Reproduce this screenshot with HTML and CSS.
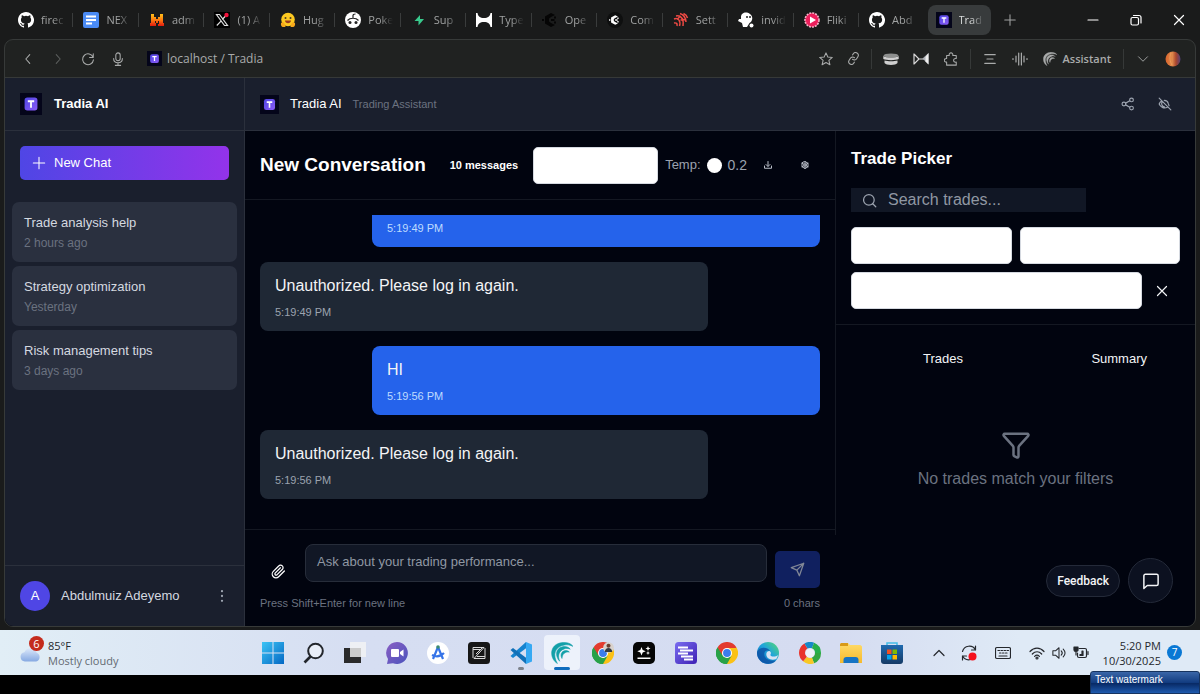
FILE: index.html
```html
<!DOCTYPE html>
<html lang="en">
<head>
<meta charset="utf-8">
<meta name="viewport" content="width=device-width, initial-scale=1">
<title>Tradia</title>
<link rel="stylesheet" href="styles.css">
</head>
<body>
<svg class="defs" aria-hidden="true">
  <defs>
    <linearGradient id="g-tradia" x1="0" y1="0" x2="1" y2="1"><stop offset="0" stop-color="#4f46e5"/><stop offset="1" stop-color="#8b5cf6"/></linearGradient>
    <linearGradient id="g-win" x1="0" y1="0" x2="1" y2="1"><stop offset="0" stop-color="#3cc4f5"/><stop offset="1" stop-color="#0468c4"/></linearGradient>
    <linearGradient id="g-teams" x1="0" y1="0" x2="1" y2="1"><stop offset="0" stop-color="#8a5fc4"/><stop offset="1" stop-color="#4b53bc"/></linearGradient>
    <linearGradient id="g-purple" x1="0" y1="0" x2="1" y2="1"><stop offset="0" stop-color="#7a6df0"/><stop offset="1" stop-color="#3d1fb4"/></linearGradient>
    <linearGradient id="g-edge" x1="0" y1="1" x2="1" y2="0"><stop offset="0" stop-color="#0a5fb8"/><stop offset=".55" stop-color="#1fa5dc"/><stop offset="1" stop-color="#58dc6a"/></linearGradient>
    <linearGradient id="g-folder" x1="0" y1="0" x2="0" y2="1"><stop offset="0" stop-color="#ffdc6a"/><stop offset="1" stop-color="#f6b92c"/></linearGradient>
    <linearGradient id="g-store" x1="0" y1="0" x2="0" y2="1"><stop offset="0" stop-color="#1f6ab0"/><stop offset="1" stop-color="#163a66"/></linearGradient>
    <linearGradient id="g-cloud" x1="0" y1="0" x2="0" y2="1"><stop offset="0" stop-color="#dce8fa"/><stop offset="1" stop-color="#86a9e2"/></linearGradient>
    <linearGradient id="g-mistral" x1="0" y1="0" x2="0" y2="1"><stop offset="0" stop-color="#ffc21a"/><stop offset=".5" stop-color="#ff7a10"/><stop offset="1" stop-color="#e01a10"/></linearGradient>
    <linearGradient id="g-planet" x1="0" y1="0" x2="1" y2="0"><stop offset="0" stop-color="#d8642c"/><stop offset=".45" stop-color="#e08a4c"/><stop offset=".7" stop-color="#a8452c"/><stop offset="1" stop-color="#54407a"/></linearGradient>
    <symbol id="i-tradia" viewBox="0 0 24 24"><rect width="24" height="24" fill="#04051a"/><rect x="5" y="5" width="14" height="14" rx="3" fill="url(#g-tradia)"/><path d="M8.500 9h7M12 9v7" stroke="#fff" stroke-width="2" fill="none"/></symbol>
    <symbol id="i-github" viewBox="0 0 16 16"><path fill="#fff" d="M8 0C3.580 0 0 3.580 0 8c0 3.540 2.290 6.530 5.470 7.590.4.070.55-.17.55-.38 0-.19-.01-.82-.01-1.490-2.010.37-2.530-.49-2.690-.94-.09-.23-.48-.94-.82-1.130-.28-.15-.68-.52-.01-.53.63-.01 1.080.58 1.230.82.72 1.210 1.870.87 2.330.66.07-.52.28-.87.51-1.070-1.780-.2-3.640-.89-3.640-3.950 0-.87.31-1.590.82-2.150-.08-.2-.36-1.020.08-2.120 0 0 .67-.21 2.200.82a7.600 7.600 0 0 1 4 0c1.530-1.040 2.200-.82 2.200-.82.44 1.100.16 1.920.08 2.120.51.56.82 1.270.82 2.150 0 3.070-1.870 3.750-3.650 3.950.29.25.54.73.54 1.480 0 1.070-.01 1.930-.01 2.200 0 .21.15.46.55.38A8 8 0 0 0 8 0z"/></symbol>
    <symbol id="i-chrome" viewBox="0 0 24 24"><path d="M12 12 1.600 6A12 12 0 0 1 22.400 6z" fill="#e33b2e"/><path d="M12 12 22.400 6A12 12 0 0 1 12 24z" fill="#fbc116"/><path d="M12 12v12A12 12 0 0 1 1.600 6z" fill="#28a148"/><path d="M12 6.500h10.700L17 15z" fill="#fbc116"/><path d="M12 6.500H1.900L7 15z" fill="#e33b2e"/><path d="M1.600 6 7.200 15l4.800 2.500L17 15l-5 9A12 12 0 0 1 1.600 6z" fill="#28a148"/><circle cx="12" cy="12" r="5.500" fill="#fff"/><circle cx="12" cy="12" r="4.300" fill="#3b7ded"/></symbol>
    <symbol id="i-comet" viewBox="0 0 24 24"><path fill="currentColor" d="M7 23.500C-2 18-2 3 11 .8c6-1 11 .8 13 4-3-1.600-6-2-9-1.600C4 5 1.500 14 7 23.500zM9.500 21C4.500 16 4.500 7 12.500 5.200c4-.8 7 .5 8.500 2.600-2.500-1-4.500-1-6.500-.3C8.500 9.500 7 15 9.500 21zM12 18c-2.500-4-.5-8 3.500-8.600 2-.2 3.500.4 4.500 1.600-5-.5-7.500 2-8 7z" stroke="currentColor" stroke-width=".6"/></symbol>
    <symbol id="i-hexc" viewBox="0 0 16 16"><path d="M9 1 3 4.500v7L9 15l4-2-4-2-2-1.500v-3L9 5l4-2z" fill="currentColor"/><path d="M9 8h3.500M0 8h2M12 5.500h2M12 10.500h2" stroke="currentColor" stroke-width="2"/></symbol>
  </defs>
</svg>

<div class="desktop">
  <header class="tabstrip">
    <nav class="tabs" aria-label="Browser tabs">
      <button class="tab"><svg class="tab-icon"><use href="#i-github"/></svg><span class="tab-name">firec</span></button>
      <button class="tab"><svg class="tab-icon" viewBox="0 0 16 16"><rect width="16" height="16" rx="2" fill="#4a8bf5"/><path d="M3 4.500h10M3 8h10M3 11.500h6" stroke="#fff" stroke-width="1.800"/></svg><span class="tab-name">NEX</span></button>
      <button class="tab"><svg class="tab-icon" viewBox="0 0 16 16"><path d="M2 2h3v3h2v2h2V5h2V2h3v9h1v3H9v-2h1V9H9v2H7V9H6v2h1v3H1v-3h1z" fill="url(#g-mistral)"/></svg><span class="tab-name">adm</span></button>
      <button class="tab"><svg class="tab-icon" viewBox="0 0 16 16"><rect width="16" height="16" fill="#000"/><path d="M2.500 2.500h3l8 11h-3zM13 2.500l-4.800 5M7 9.200l-4.200 4.300" stroke="#ddd" fill="none" stroke-width="1.200"/><circle cx="12.500" cy="3" r="2.200" fill="#f4123c"/></svg><span class="tab-name">(1) A</span></button>
      <button class="tab"><svg class="tab-icon" viewBox="0 0 16 16"><circle cx="8" cy="7.500" r="6.800" fill="#fdc921"/><path d="M1 11c2-2 4 0 4.500 4H3c-1.500 0-2.500-2-2-4zM15 11c-2-2-4 0-4.500 4H13c1.500 0 2.500-2 2-4z" fill="#f7a81c"/><path d="M5 8.500h6c0 3.500-6 3.500-6 0z" fill="#9a3b20"/><circle cx="5.500" cy="6" r="1" fill="#4b3b24"/><circle cx="10.500" cy="6" r="1" fill="#4b3b24"/></svg><span class="tab-name">Hug</span></button>
      <button class="tab"><svg class="tab-icon" viewBox="0 0 16 16"><circle cx="8" cy="8" r="8" fill="#fff"/><path d="M8 6V3.500C8 2.500 9.500 2 10.500 2M2.500 8.500c2.500-3 8.500-3 11 0" stroke="#222" stroke-width="1.200" fill="none"/><circle cx="5" cy="10.500" r="1.500" fill="#222"/><circle cx="11" cy="10.500" r="1.500" fill="#222"/></svg><span class="tab-name">Poke</span></button>
      <button class="tab"><svg class="tab-icon" viewBox="0 0 16 16"><path d="M9 3 3.500 9h4v4.500L13 7H9z" fill="#38c98c"/></svg><span class="tab-name">Sup</span></button>
      <button class="tab"><svg class="tab-icon" viewBox="0 0 16 16"><path d="M0 1h1.500c.5 3.500 2.500 5 6.500 5s6-1.500 6.500-5H16v14h-1.500c-.5-3.500-2.500-5-6.500-5s-6 1.500-6.500 5H0z" fill="#fff"/></svg><span class="tab-name">Type</span></button>
      <button class="tab"><svg class="tab-icon ink-black" viewBox="0 0 16 16"><use href="#i-hexc" width="16" height="16"/></svg><span class="tab-name">Ope</span></button>
      <button class="tab"><svg class="tab-icon ink-white" viewBox="0 0 16 16"><circle cx="8" cy="8" r="8" fill="#0e0f0f"/><use href="#i-hexc" x="2" y="2.500" width="11" height="11"/></svg><span class="tab-name">Com</span></button>
      <button class="tab"><svg class="tab-icon" viewBox="0 0 16 16"><g stroke="#ee4a44" stroke-width="1.500" fill="none"><path d="M1 7c4-1.500 7 1.500 5.500 7M1 11c2.500-.5 3.500.5 3 3M3 4c5-1 8 3 7 10M7 1.500c3.500 1 5.500 3.500 6 8.500M10.500 1.500c2 .8 3.500 2.500 4 4.500M4 7.500l3-3 3 2.500M7.500 8l5-.5"/></g></svg><span class="tab-name">Sett</span></button>
      <button class="tab"><svg class="tab-icon" viewBox="0 0 16 16"><path d="M3 5C3 1 8-1 12 2s2 8-.5 9L9 15H5l-1-4-4-2 1-2h2z" fill="#fff"/><circle cx="9" cy="5" r="1" fill="#222"/><circle cx="12" cy="5" r="1" fill="#222"/><circle cx="13.500" cy="13.500" r="2" fill="#fff"/></svg><span class="tab-name">invid</span></button>
      <button class="tab"><svg class="tab-icon" viewBox="0 0 16 16"><circle cx="8" cy="8" r="7" fill="#ec1e5b" stroke="#f7b5c8" stroke-width="1.600" stroke-dasharray="2 1"/><path d="M6 4.500v7l6-3.500z" fill="#fff"/></svg><span class="tab-name">Fliki</span></button>
      <button class="tab"><svg class="tab-icon"><use href="#i-github"/></svg><span class="tab-name">Abd</span></button>
      <button class="tab tab-active" aria-current="page"><svg class="tab-icon"><use href="#i-tradia"/></svg><span class="tab-name">Trad</span></button>
    </nav>
    <button class="new-tab" aria-label="New tab"><svg viewBox="0 0 16 16" class="ic14 line"><path d="M8 2v12M2 8h12"/></svg></button>
    <div class="window-controls">
      <button aria-label="Minimize"><svg viewBox="0 0 12 12" class="ic12 line"><path d="M1 6h10"/></svg></button>
      <button aria-label="Restore"><svg viewBox="0 0 12 12" class="ic12 line"><rect x="1" y="3.500" width="7.500" height="7.500" rx="1.500"/><path d="M3.500 1.500H9a2 2 0 0 1 2 2V9"/></svg></button>
      <button aria-label="Close"><svg viewBox="0 0 12 12" class="ic12 line"><path d="m1.500 1.500 9 9m0-9-9 9"/></svg></button>
    </div>
  </header>

  <div class="window">
    <div class="toolbar">
      <div class="nav-buttons">
        <button aria-label="Back"><svg viewBox="0 0 16 16" class="ic14 line"><path d="M10 3 5.500 8l4.500 5"/></svg></button>
        <button class="dim" aria-label="Forward"><svg viewBox="0 0 16 16" class="ic14 line"><path d="m6 3 4.500 5L6 13"/></svg></button>
        <button aria-label="Reload"><svg viewBox="0 0 16 16" class="ic14 line"><path d="M13.800 6A6.200 6.200 0 1 0 14.200 9M14 2v4.200H9.800"/></svg></button>
        <button aria-label="Voice"><svg viewBox="0 0 16 16" class="ic14 line"><rect x="5.500" y="1" width="5" height="9" rx="2.500"/><path d="M3 7.500c0 6.500 10 6.500 10 0M8 12.500v3M5 15.300h6"/></svg></button>
      </div>
      <a class="address" href="#"><svg class="favicon"><use href="#i-tradia"/></svg>localhost / Tradia</a>
      <div class="tool-group">
        <button aria-label="Bookmark"><svg viewBox="0 0 16 16" class="ic14 line"><path d="m8 1 2.100 4.700 5.100.5-3.900 3.400 1.200 5L8 12l-4.500 2.600 1.200-5L.8 6.200l5.100-.5z"/></svg></button>
        <button aria-label="Copy link"><svg viewBox="0 0 24 24" class="ic13 line2"><g transform="rotate(-12 12 12)"><path d="M10 13a5 5 0 0 0 7.540.54l3-3a5 5 0 0 0-7.070-7.070l-1.720 1.710M14 11a5 5 0 0 0-7.540-.54l-3 3a5 5 0 0 0 7.070 7.070l1.710-1.710"/></g></svg></button>
      </div>
      <div class="tool-group tool-wide">
        <button aria-label="Storage extension"><svg viewBox="0 0 16 16" class="ic16"><ellipse cx="8" cy="4.500" rx="7.500" ry="2" fill="#8d8f8e"/><path d="M.3 5c3 2 12.400 2 15.400 0v3c-3 1.500-12.400 1.500-15.400 0zM1.500 9.500c3 1 10 1 13 0V12c-1.500 2.500-11.500 2.500-13 0z" fill="#cfcfcf"/></svg></button>
        <button aria-label="Bow extension"><svg viewBox="0 0 16 16" class="ic16"><path d="M1 2.500v11M1 3l5 5-5 5M5 8h6" stroke="#d8d8d8" stroke-width="1.200" fill="none"/><path d="M15.500 2 9.500 7.500l6 6z" fill="#aeb2b8"/><path d="M15.500 2v11.500l-3-3V6z" fill="#eee"/></svg></button>
        <button aria-label="Extensions"><svg viewBox="0 0 16 16" class="ic14 line"><path d="M3 4h3c-1-4 5-4 4 0h4v3.500c-4-.8-4 5 0 4V15H3v-3.500c-3.500.5-3.500-4.500 0-4z"/></svg></button>
      </div>
      <div class="tool-group tool-wide">
        <button aria-label="Summarize"><svg viewBox="0 0 16 16" class="ic14 line"><path d="M2 3h12M4.500 8h7M2 13h12"/></svg></button>
        <button aria-label="Voice mode"><svg viewBox="0 0 16 16" class="ic16 line"><path d="M1 7.500v1M4 5v6M6.700 2v12M9.400 2v12M12 5v6M15 7.500v1"/></svg></button>
        <button class="assistant"><svg viewBox="0 0 24 24" class="ic14"><use href="#i-comet"/></svg>Assistant</button>
      </div>
      <div class="tool-group tool-wide tool-last">
        <button aria-label="More"><svg viewBox="0 0 16 16" class="ic12 line"><path d="m2 5 6 6 6-6"/></svg></button>
        <button aria-label="Profile"><svg viewBox="0 0 16 16" class="ic16"><circle cx="8" cy="8" r="7.500" fill="url(#g-planet)"/><path d="M6 2c-2 4-1 9 1 12" stroke="#f6b572" fill="none" opacity=".5"/></svg></button>
      </div>
    </div>

    <div class="app">
      <aside class="sidebar">
        <div class="brand"><svg class="brand-logo"><use href="#i-tradia"/></svg><strong>Tradia AI</strong></div>
        <button class="new-chat"><svg viewBox="0 0 16 16" class="ic14 line"><path d="M8 1.500v13M1.500 8h13"/></svg>New Chat</button>
        <nav class="history" aria-label="Chat history">
          <a class="history-item" href="#"><span class="history-name">Trade analysis help</span><span class="history-time">2 hours ago</span></a>
          <a class="history-item" href="#"><span class="history-name">Strategy optimization</span><span class="history-time">Yesterday</span></a>
          <a class="history-item" href="#"><span class="history-name">Risk management tips</span><span class="history-time">3 days ago</span></a>
        </nav>
        <div class="account">
          <span class="avatar">A</span><span class="account-name">Abdulmuiz Adeyemo</span>
          <button aria-label="Account menu"><svg viewBox="0 0 16 16" class="ic14" fill="currentColor"><circle cx="8" cy="2.500" r="1.300"/><circle cx="8" cy="8" r="1.300"/><circle cx="8" cy="13.500" r="1.300"/></svg></button>
        </div>
      </aside>

      <div class="workspace">
        <header class="app-header">
          <svg class="header-logo"><use href="#i-tradia"/></svg>
          <span class="header-name">Tradia AI</span><span class="header-sub">Trading Assistant</span>
          <div class="header-actions">
            <button aria-label="Share"><svg viewBox="0 0 24 24" class="ic14 line2"><circle cx="18" cy="5" r="3.200"/><circle cx="5" cy="12" r="3.200"/><circle cx="18" cy="19" r="3.200"/><path d="m8 13.500 7 4M15 6.500l-7 4"/></svg></button>
            <button aria-label="Hide"><svg viewBox="0 0 24 24" class="ic14 line2"><path d="m2 2 20 20M6.500 6.500C4 8.500 2.500 10.500 2 12c2 5 8 8.500 14 5.500M7 8c-2 4 0 8 4 9M10.700 5.800C15 6 17 8 17.500 11l1.500 4"/></svg></button>
          </div>
        </header>

        <div class="panes">
          <main class="chat">
            <div class="chat-header">
              <h1>New Conversation</h1>
              <span class="count">10 messages</span>
              <select class="blank model" aria-label="Model"></select>
              <label class="temp"><span>Temp:</span><input type="range" min="0" max="1" step="0.1" value="0.2"><span class="temp-value">0.2</span></label>
              <button class="mini" aria-label="Export"><svg viewBox="0 0 16 16" class="ic8 line2"><path d="M8 1v9M4 7l4 4 4-4M1 10v4.500h14V10"/></svg></button>
              <button class="mini" aria-label="Settings"><svg viewBox="0 0 16 16" class="ic8 line2"><circle cx="8" cy="8" r="2.500"/><path d="M8 1 14 4.500v7L8 15l-6-3.500v-7zM8 1v4M8 11v4M2 4.500l4 2M10 9.500l4 2M14 4.500l-4 2M6 9.500l-4 2"/></svg></button>
            </div>
            <div class="messages">
              <div class="scroller">
                <article class="message mine"><time>5:19:49 PM</time></article>
                <article class="message"><p>Unauthorized. Please log in again.</p><time>5:19:49 PM</time></article>
                <article class="message mine"><p>HI</p><time>5:19:56 PM</time></article>
                <article class="message"><p>Unauthorized. Please log in again.</p><time>5:19:56 PM</time></article>
              </div>
            </div>
            <form class="composer">
              <div class="composer-row">
                <button type="button" class="attach" aria-label="Attach file"><svg viewBox="0 0 24 24" class="ic15 line2"><path d="m21.400 11.100-9.200 9.200a6 6 0 0 1-8.500-8.500l8.600-8.600A4 4 0 1 1 18 8.800l-8.600 8.600a2 2 0 0 1-2.800-2.800l8.500-8.500"/></svg></button>
                <textarea rows="1" aria-label="Message" placeholder="Ask about your trading performance..."></textarea>
                <button type="button" class="send" aria-label="Send"><svg viewBox="0 0 24 24" class="ic15 line2"><path d="m22 2-7 20-4-9-9-4zM22 2 11 13"/></svg></button>
              </div>
              <div class="hints"><span>Press Shift+Enter for new line</span><span>0 chars</span></div>
            </form>
          </main>

          <section class="picker">
            <div class="picker-filters">
              <h2>Trade Picker</h2>
              <label class="search"><svg viewBox="0 0 24 24" class="ic15 line2"><circle cx="11" cy="11" r="8.500"/><path d="m22 22-4.800-4.800"/></svg><input type="search" aria-label="Search trades" placeholder="Search trades..."></label>
              <div class="filter-row"><select class="blank" aria-label="Symbol"></select><select class="blank" aria-label="Outcome"></select></div>
              <div class="filter-row"><select class="blank" aria-label="Period"></select><button class="clear" aria-label="Clear filters"><svg viewBox="0 0 12 12" class="ic12 line"><path d="m1.500 1.500 9 9m0-9-9 9"/></svg></button></div>
            </div>
            <div class="picker-tabs"><button>Trades</button><button>Summary</button></div>
            <div class="empty"><svg viewBox="0 0 24 24" class="ic30 line2"><path d="M10 20a1 1 0 0 0 .55.900l2 1A1 1 0 0 0 14 21v-7a2 2 0 0 1 .520-1.340L21.740 4.670A1 1 0 0 0 21 3H3a1 1 0 0 0-.740 1.670l7.220 7.990A2 2 0 0 1 10 14z"/></svg><p>No trades match your filters</p></div>
          </section>
        </div>
      </div>

      <div class="floating">
        <button class="feedback">Feedback</button>
        <button class="bubble" aria-label="Open chat"><svg viewBox="0 0 24 24" class="ic18 line2"><path d="M21.500 16a2 2 0 0 1-2 2H7l-4.500 4V5a2 2 0 0 1 2-2h15a2 2 0 0 1 2 2z"/></svg></button>
      </div>
    </div>
  </div>

  <footer class="taskbar">
    <button class="weather">
      <span class="weather-icon"><svg viewBox="0 0 24 16" class="cloud"><path d="M6 15.500a5 5 0 0 1-.5-9.900A7 7 0 0 1 18.500 6a5 5 0 0 1-.5 9.500z" fill="url(#g-cloud)"/></svg><span class="alert">6</span></span>
      <span class="weather-text"><span>85°F</span><span class="weather-desc">Mostly cloudy</span></span>
    </button>
    <nav class="apps" aria-label="Taskbar apps">
      <button aria-label="Start"><svg viewBox="0 0 22 22"><path d="M0 0h10.500v10.500H0zM11.500 0H22v10.500H11.500zM0 11.500h10.500V22H0zM11.500 11.500H22V22H11.500z" fill="url(#g-win)"/></svg></button>
      <button aria-label="Search"><svg viewBox="0 0 22 22"><circle cx="12.500" cy="9" r="7.300" fill="#e9eef8" stroke="#23262c" stroke-width="2"/><path d="m7.500 14.500-6 6" stroke="#23262c" stroke-width="2.600"/></svg></button>
      <button aria-label="Task view"><svg viewBox="0 0 22 22"><rect x="0" y="6" width="17" height="15" fill="#2a2a2b"/><rect x="6" y="0" width="16" height="15" fill="#f4f4f4" opacity=".8"/></svg></button>
      <button aria-label="Meet"><svg viewBox="0 0 22 22"><path d="M11 0a11 11 0 1 1-4 21.300L1 22l1-5A11 11 0 0 1 11 0z" fill="url(#g-teams)"/><rect x="5" y="7" width="8" height="8" rx="1" fill="#fff"/><path d="m14 10 3.500-2.500v7L14 12z" fill="#fff"/></svg></button>
      <button aria-label="App Studio"><svg viewBox="0 0 22 22"><circle cx="11" cy="11" r="11" fill="#fff"/><path d="M11 5 6 17M11 5l5 12M5 13c4 2 8 2 12-2" stroke="#3674e8" stroke-width="2.200" fill="none"/><circle cx="11" cy="5" r="1.800" fill="#3b8b72"/></svg></button>
      <button aria-label="Zed"><svg viewBox="0 0 22 22"><rect width="22" height="22" rx="3.500" fill="#171717"/><path d="M5 16V5.500h11L6 16.500h11V6M5 7.500h8M9 14.500h8M8 12l6-6" stroke="#d9d9d9" fill="none"/></svg></button>
      <button class="running" aria-label="Code editor"><svg viewBox="0 0 22 22"><path d="M16 0 .5 14l2.500 2L17 5.500z" fill="#1583cf"/><path d="M16 22 .5 8 3 6l14 10.500z" fill="#1170b8"/><path d="m16 0 6 2.500v17L16 22z" fill="#36a9f3"/></svg></button>
      <button class="running current" aria-label="Browser"><svg viewBox="0 0 24 24" class="comet"><use href="#i-comet"/></svg></button>
      <button aria-label="Chrome profile"><svg viewBox="0 0 24 24"><use href="#i-chrome"/><circle cx="18" cy="6" r="5.800" fill="#d8d2cd"/><circle cx="18" cy="4" r="2.200" fill="#6a4030"/><path d="M14 11c0-6 8-6 8 0z" fill="#333b45"/></svg></button>
      <button aria-label="Sparkle"><svg viewBox="0 0 22 22"><rect width="22" height="22" rx="5" fill="#050505"/><path d="m8.500 5 1.200 3 3 1.200-3 1.200-1.200 3-1.200-3-3-1.200 3-1.200zM15 4l.7 1.800 1.800.7-1.800.7L15 9l-.7-1.800-1.800-.7 1.800-.7zM15 9l.6 1.400 1.400.6-1.400.6L15 13l-.6-1.400L13 11l1.400-.6zM4.500 15.500h13V17h-13z" fill="#fff"/></svg></button>
      <button aria-label="Lists"><svg viewBox="0 0 22 22"><rect width="22" height="22" rx="3.500" fill="url(#g-purple)"/><path d="M3 5.500h10M5 8.500h13M3 11.500h10M6 14.500h12M9 17.500h9" stroke="#fff" stroke-width="1.800"/></svg></button>
      <button aria-label="Chrome"><svg viewBox="0 0 24 24"><use href="#i-chrome"/></svg></button>
      <button aria-label="Edge"><svg viewBox="0 0 22 22"><circle cx="11" cy="11" r="11" fill="url(#g-edge)"/><path d="M0 10c2-5 10-6 13-1-5-2-7 2-5 6 2 3 6 4 11 3.500C15 23 6 23 2 17c-1.500-2-2-4-2-7z" fill="#0c4da2" opacity=".75"/><path d="M12.500 9c2 1 1.500 3 .8 4 1 2 5 2 8 0l-2 4c-5 2-10-.5-10-4.500 0-2 1-3.500 3.200-3.500z" fill="#d7e2f3"/></svg></button>
      <button aria-label="Colour wheel"><svg viewBox="0 0 22 22"><g fill="none" stroke-width="6"><path d="M3 11a8 8 0 0 1 4-7" stroke="#e9342c"/><path d="M7 4a8 8 0 0 1 7-.5" stroke="#168ac8"/><path d="M14 3.500a8 8 0 0 1 5 7.500" stroke="#25b04c"/><path d="M19 11a8 8 0 0 1-5 7.500" stroke="#31a640"/><path d="M14 18.500A8 8 0 0 1 6 17" stroke="#f8c824"/><path d="M6 17a8 8 0 0 1-3-6" stroke="#e9342c"/></g><circle cx="11" cy="11" r="4.500" fill="#eef1f8"/></svg></button>
      <button aria-label="Files"><svg viewBox="0 0 22 22"><path d="M0 3c0-1.500 1-2 2-2h6l2 2h10c1 0 2 1 2 2v16H0z" fill="url(#g-folder)"/><path d="M0 2.500C0 1.500 1 1 2 1h6v3H0z" fill="#d89a18"/><path d="M3.500 21v-3c0-2 1-3 3-3h9c2 0 3 1 3 3v3z" fill="#1674c4"/></svg></button>
      <button aria-label="Store"><svg viewBox="0 0 22 22"><path d="M6 4V1h10v3" fill="none" stroke="#43bce8" stroke-width="1.500"/><path d="M0 3h22v16c0 2-1 3-3 3H3c-2 0-3-1-3-3z" fill="url(#g-store)"/><path d="M6 7.500h4.500V12H6z" fill="#f25022"/><path d="M11.500 7.500H16V12h-4.500z" fill="#7fba00"/><path d="M6 13h4.500v4.500H6z" fill="#00a4ef"/><path d="M11.500 13H16v4.500h-4.500z" fill="#ffb900"/></svg></button>
    </nav>
    <div class="tray">
      <button aria-label="Hidden icons"><svg viewBox="0 0 12 12" class="ic12 line"><path d="m1 8.500 5-5 5 5"/></svg></button>
      <button class="sync" aria-label="Update"><svg viewBox="0 0 16 16" class="ic16 line"><path d="M1.500 6.500A7 7 0 0 1 14.500 5M14.500 1v4h-4M14.500 9.500A7 7 0 0 1 1.500 11M1.500 15v-4h4"/><circle cx="11.500" cy="11.500" r="4" fill="#f5101c" stroke="none"/></svg></button>
      <button class="keyboard" aria-label="Keyboard"><svg viewBox="0 0 16 16" class="ic16 line"><rect x=".5" y="2.500" width="15" height="11" rx="1.500"/><path d="M3 5.500h1.500M6 5.500h1.500M9 5.500h1.500M12 5.500h1.500M4.500 8H6M7.500 8H9M10.500 8H12M4 11h8"/></svg></button>
      <button class="status" aria-label="Quick settings">
        <svg viewBox="0 0 16 16" class="ic16 line"><path d="M1 6.500c4-4.500 10-4.500 14 0M3.300 9c3-3 6.500-3 9.400 0M5.600 11.300c1.500-1.500 3.300-1.500 4.800 0"/><circle cx="8" cy="13" r="1"/></svg>
        <svg viewBox="0 0 16 16" class="ic14 line"><path d="M1 5.500h3L8 2v12l-4-3.500H1zM10.500 5.500c1.500 1.500 1.500 3.500 0 5M12.800 3.500c2.800 2.800 2.800 6.200 0 9"/></svg>
        <svg viewBox="0 0 16 16" class="ic16 line"><path d="M6 3.500h6c1 0 1.500.5 1.500 1.500v6c0 1-.5 1.500-1.500 1.500H6c-1 0-1.500-.5-1.500-1.500V8M15 6.500v3"/><path d="M7 9.500v1h3V6H9v3.500zM1 2v3c0 2 4 2 4 0V2zM3 6v4" fill="currentColor"/></svg>
      </button>
      <button class="clock"><span>5:20 PM</span><span>10/30/2025</span></button>
      <span class="notices">7</span>
    </div>
  </footer>
  <div class="bezel"><span class="watermark">Text watermark</span></div>
</div>
</body>
</html>
```
FILE: styles.css
```css
* { box-sizing: border-box; }
body { margin: 0; background: #1a1b1b; color: #f3f4f6; font-family: "Liberation Sans", Arial, sans-serif; font-size: 13px; line-height: 18px; }
button { display: inline-flex; align-items: center; justify-content: center; margin: 0; padding: 0; border: 0; background: none; color: inherit; font: inherit; cursor: pointer; }
a { color: inherit; text-decoration: none; }
h1, h2, p { margin: 0; }
svg { display: block; flex: none; }
.defs { position: absolute; width: 0; height: 0; }

.ic8 { width: 8px; height: 8px; }
.ic12 { width: 12px; height: 12px; }
.ic13 { width: 13px; height: 13px; }
.ic14 { width: 14px; height: 14px; }
.ic15 { width: 15px; height: 15px; }
.ic16 { width: 16px; height: 16px; }
.ic18 { width: 18px; height: 18px; }
.ic30 { width: 30px; height: 30px; }
.line, .line2 { fill: none; stroke: currentColor; stroke-linecap: round; stroke-linejoin: round; }
.line { stroke-width: 1.2; }
.line2 { stroke-width: 2; }
.ink-black { color: #050505; }
.ink-white { color: #fff; }

.desktop { display: flex; flex-direction: column; min-height: 100vh; }

/* Browser tabs */
.tabstrip { display: flex; height: 39px; padding-left: 8px; color: #a0a2a2; font-family: "Open Sans", "Noto Sans", sans-serif; font-size: 11px; }
.tabs { display: flex; flex: 1; min-width: 0; align-items: center; }
.tab { position: relative; flex: 1 1 0; min-width: 0; height: 30px; gap: 7px; padding: 0 4px 0 10px; justify-content: flex-start; }
.tab::after { content: ""; position: absolute; right: 0; top: 8px; width: 1px; height: 14px; background: #3a3c3c; }
.tab:nth-last-child(-n+2)::after { display: none; }
.tab-icon { width: 16px; height: 16px; }
.tab-name { white-space: nowrap; mask-image: linear-gradient(90deg, #000 12px, transparent 25px); }
.tab-active { margin: 0 1px 0 3px; padding: 0 4px 0 8px; border-radius: 8px; background: #383b3c; color: #d8dada; }
.new-tab { width: 36px; }
.window-controls { display: flex; margin-left: 43px; color: #fff; }
.window-controls button { width: 43px; }

/* Browser window */
.window { display: flex; flex: 1; flex-direction: column; margin: 0 4px 3px; border: 1px solid #373a39; border-radius: 9px; overflow: hidden; background: #202221; }
.toolbar { display: flex; align-items: center; height: 38px; padding: 0 7px 0 8px; border-bottom: 1px solid #363938; color: #a9abab; font-family: "Open Sans", "Noto Sans", sans-serif; font-size: 12px; }
.nav-buttons { display: flex; }
.nav-buttons button, .tool-wide button { width: 30px; height: 30px; }
.nav-buttons .dim { color: #5c5f5e; }
.address { display: flex; flex: 1; align-items: center; gap: 5px; margin-left: 14px; }
.favicon { width: 15px; height: 15px; }
.tool-group { display: flex; align-items: center; height: 20px; padding: 0 4px; border-right: 1px solid #363938; }
.tool-group button { width: 27px; height: 30px; }
.tool-group.tool-wide button { width: 30px; }
.tool-group.tool-wide .assistant { width: auto; gap: 6px; padding: 0 8px; font-size: 11px; font-weight: 600; }
.tool-last { border: 0; padding-right: 0; }

/* Application shell */
.app { position: relative; display: flex; flex: 1; background: #01040f; }
.sidebar { display: flex; flex: none; flex-direction: column; width: 240px; border-right: 1px solid #2b303c; background: #1a1f2d; }
.brand { display: flex; align-items: center; gap: 12px; height: 53px; padding-left: 15px; border-bottom: 1px solid #2b303c; color: #fff; }
.brand-logo { width: 22px; height: 22px; }
.new-chat { height: 34px; margin: 15px 15px 22px; padding-left: 12px; gap: 8px; justify-content: flex-start; border-radius: 5px; background: linear-gradient(90deg, #4f46e5, #9333ea); color: #fff; }
.history { display: flex; flex-direction: column; gap: 4px; padding: 0 7px; }
.history-item { display: flex; flex-direction: column; gap: 3px; height: 60px; padding: 12px; border-radius: 7px; background: #2a303f; }
.history-name { color: #d5d9e0; }
.history-time { color: #6b7280; font-size: 12px; line-height: 16px; }
.account { display: flex; align-items: center; height: 61px; margin-top: auto; padding: 0 15px; gap: 11px; border-top: 1px solid #2b303c; color: #d5d9e0; }
.account button { width: 15px; height: 30px; margin-left: auto; color: #9ca3af; }
.avatar { display: grid; place-items: center; width: 30px; height: 30px; border-radius: 50%; background: #4f46e5; color: #fff; }

.workspace { display: flex; flex: 1; flex-direction: column; min-width: 0; }
.app-header { display: flex; align-items: center; height: 53px; padding: 0 15px; border-bottom: 1px solid #2b303c; background: #1a1f2d; }
.header-logo { width: 19px; height: 19px; }
.header-name { margin: 0 11px; color: #fff; }
.header-sub { color: #6b7280; font-size: 11px; }
.header-actions { display: flex; gap: 7px; margin-left: auto; color: #9ca3af; }
.header-actions button { width: 30px; height: 30px; }

.panes { display: flex; flex: 1; }
.chat { display: flex; flex: 1; flex-direction: column; min-width: 0; }
.chat-header { display: flex; align-items: center; height: 69px; padding: 0 15px; border-bottom: 1px solid #141822; }
.chat-header h1 { color: #fff; font-size: 19px; line-height: 26px; }
.count { margin: 0 15px 0 auto; color: #fff; font-size: 11px; font-weight: 700; }
.blank { appearance: none; flex: 1; min-width: 0; height: 37px; border: 1px solid #d5d9e0; border-radius: 5px; background: #fff; color: #fff; }
.blank.model { flex: none; width: 125px; }
.temp { display: flex; align-items: center; gap: 6px; margin: 0 2px 0 7px; color: #9ca3af; }
.temp-value { font-size: 14px; }
.temp input { appearance: none; width: 15px; height: 15px; margin: 0; background: none; }
.temp input::-webkit-slider-thumb { appearance: none; width: 15px; height: 15px; border-radius: 50%; background: #fff; }
.mini { width: 37px; height: 37px; color: #b9bec8; }
.mini:last-child { width: 30px; margin-left: 4px; }

.messages { display: flex; flex: 1; padding: 15px; }
.scroller { display: flex; flex: 1 1 0; flex-direction: column; justify-content: flex-end; gap: 15px; height: 299px; min-height: 100%; padding-bottom: 15px; overflow: hidden; }
.message { display: flex; flex: none; flex-direction: column; justify-content: flex-end; align-self: flex-start; gap: 6px; width: 80%; min-height: 69px; padding: 11px 15px; border-radius: 8px; background: #1f2835; }
.message p { color: #f3f4f6; font-size: 16px; line-height: 24px; }
.message time { color: #9ca3af; font-size: 11px; line-height: 16px; }
.message.mine { align-self: flex-end; background: #2563eb; }
.message.mine time { color: #bfdbfe; }

.composer { padding: 14px 15px 15px; border-top: 1px solid #141822; }
.composer-row { display: flex; align-items: flex-end; gap: 8px; }
.attach { width: 37px; height: 34px; color: #fff; }
.composer textarea { flex: 1; min-width: 0; height: 38px; margin-bottom: 6px; padding: 8px 11px; resize: none; border: 1px solid #272d3a; border-radius: 8px; background: #111725; color: #fff; font: inherit; }
.composer textarea::placeholder { color: #9097a3; }
.send { width: 45px; height: 37px; border-radius: 5px; background: #10205f; color: #818796; }
.hints { display: flex; justify-content: space-between; margin-top: 7px; color: #6b7280; font-size: 11px; line-height: 16px; }

.picker { flex: none; width: 360px; margin-bottom: 91px; border-left: 1px solid #141822; }
.picker-filters { display: flex; flex-direction: column; gap: 8px; padding: 16px 15px 15px; border-bottom: 1px solid #141822; }
.picker h2 { margin-bottom: 9px; color: #fff; font-size: 17px; line-height: 24px; }
.search { display: flex; align-items: center; gap: 11px; width: 235px; height: 24px; margin-bottom: 7px; padding-left: 11px; background: #111725; color: #9ca3af; }
.search input { flex: 1; min-width: 0; padding: 0; border: 0; background: none; color: #fff; font: inherit; font-size: 16px; }
.search input::placeholder { color: #9097a3; }
.filter-row { display: flex; gap: 8px; }
.clear { width: 24px; margin-right: 6px; }
.picker-tabs { display: flex; justify-content: space-between; height: 68px; padding: 0 48px 0 87px; color: #f3f4f6; }
.empty { display: flex; flex-direction: column; align-items: center; gap: 7px; padding-top: 37px; color: #6b7280; font-size: 16px; line-height: 24px; }

.floating { position: absolute; right: 22px; bottom: 23px; display: flex; align-items: center; gap: 8px; }
.floating button { border: 1px solid #242a39; background: #0c1120; }
.feedback { height: 32px; padding: 0 10px; border-radius: 16px; font-family: Roboto, sans-serif; font-size: 12px; font-weight: 500; }
.bubble { width: 45px; height: 45px; border-radius: 50%; }

/* Taskbar */
.taskbar { display: grid; grid-template-columns: 252px 1fr 287px; height: 45px; background: linear-gradient(90deg, #e1eef6, #d6def2 30%, #d5dcf1 70%, #dfeaf6 85%, #dfeaf6); color: #25282d; font-family: "Open Sans", "Noto Sans", sans-serif; font-size: 11px; line-height: 15px; }
.weather { justify-content: flex-start; gap: 6px; padding-left: 19px; text-align: left; }
.weather-icon { position: relative; padding-top: 4px; }
.cloud { width: 23px; height: 15px; }
.alert { position: absolute; top: -7px; right: -2px; width: 15px; height: 15px; border-radius: 50%; background: #c42b1c; color: #fff; text-align: center; }
.weather-text { display: flex; flex-direction: column; }
.weather-desc { color: #646a72; }
.apps { display: flex; min-width: 0; }
.apps button { position: relative; flex: 1 1 0; min-width: 0; margin: 5px 3px; border-radius: 4px; }
.apps svg { width: 22px; height: 22px; }
.apps .comet { color: #12a0a8; }
.apps .current { background: #edf2fb; }
.apps .running::after { content: ""; position: absolute; bottom: 0; left: calc(50% - 3px); width: 6px; height: 3px; border-radius: 2px; background: #7d828b; }
.apps .current::after { left: calc(50% - 8px); width: 16px; background: #0f6cbd; }
.tray { display: flex; align-items: center; justify-content: flex-end; padding-right: 18px; }
.tray button { height: 45px; }
.sync { margin-left: 16px; }
.keyboard { margin: 0 18px; }
.status { gap: 7px; }
.tray .clock { flex-direction: column; align-items: flex-end; margin: 0 6px 0 14px; }
.notices { display: grid; place-items: center; width: 15px; height: 15px; border-radius: 50%; background: #0a78d4; color: #fff; font-size: 10px; }
.bezel { position: relative; height: 19px; background: #000; }
.watermark { position: absolute; right: 0; bottom: 0; width: 110px; height: 23px; padding-left: 4px; border: 1px solid #16335f; border-radius: 3px 3px 0 0; background: linear-gradient(#3a66a8, #123c80 50%, #082a66 55%, #1e5aae); color: #fff; font-size: 10px; line-height: 16px; }
```
